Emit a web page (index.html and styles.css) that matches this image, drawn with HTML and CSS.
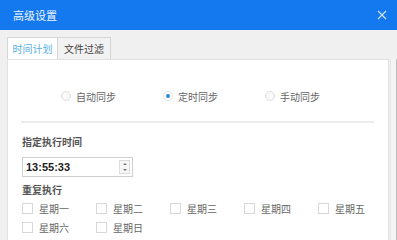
FILE: index.html
```html
<!DOCTYPE html>
<html>
<head>
<meta charset="utf-8">
<link rel="stylesheet" href="styles.css">
</head>
<body>
<div class="dialog">
  <div class="titlebar">
    <span class="title">高级设置</span>
    <svg class="close" width="10" height="10" viewBox="0 0 10 10"><path d="M1 1L9 9M9 1L1 9" stroke="#cfe3fb" stroke-width="1.2" fill="none"/></svg>
  </div>
  <div class="body">
    <div class="tabs">
      <div class="tab active">时间计划</div>
      <div class="tab">文件过滤</div>
    </div>
    <div class="panelwrap">
      <div class="panel">
        <div class="radios">
          <label class="radio"><span class="rb"></span>自动同步</label>
          <label class="radio"><span class="rb on"></span>定时同步</label>
          <label class="radio"><span class="rb"></span>手动同步</label>
        </div>
        <div class="sep"></div>
        <div class="section">
          <div class="heading">指定执行时间</div>
          <div class="timebox">
            <span class="timeval">13:55:33</span>
            <span class="spin"><span class="up"></span><span class="down"></span></span>
          </div>
          <div class="heading h2">重复执行</div>
          <div class="days">
            <label class="cb"><span class="box"></span>星期一</label>
            <label class="cb"><span class="box"></span>星期二</label>
            <label class="cb"><span class="box"></span>星期三</label>
            <label class="cb"><span class="box"></span>星期四</label>
            <label class="cb"><span class="box"></span>星期五</label>
            <label class="cb"><span class="box"></span>星期六</label>
            <label class="cb"><span class="box"></span>星期日</label>
          </div>
        </div>
      </div>
      <div class="scrollbar"></div>
    </div>
  </div>
</div>
</body>
</html>
```
FILE: styles.css
```css
* { box-sizing: border-box; }
html, body { margin: 0; padding: 0; }
body {
  width: 397px; height: 240px; overflow: hidden;
  font-family: "Noto Sans CJK SC", "Liberation Sans", sans-serif;
  font-size: 10px; color: #555;
  background: #f0f0f0;
}
.dialog { width: 397px; height: 240px; display: flex; flex-direction: column; }
.titlebar {
  height: 30px; background: #1478ee; color: #fff;
  display: flex; align-items: center; justify-content: space-between;
  padding: 0 10px 0 13px; flex-shrink: 0;
}
.title { font-size: 11px; color: #eef5ff; }
.close { display: block; }
.body { flex: 1; display: flex; flex-direction: column; padding: 7px 0 0 7px; }
.tabs { display: flex; height: 22px; }
.tab {
  width: 51px; height: 22px; display: flex; align-items: center; justify-content: center;
  border: 1px solid #d6d6d6; border-bottom: none; background: #f2f2f2; color: #444;
  font-size: 10px;
}
.tab.active { background: #fff; color: #5ab0e0; width: 51px; }
.tab + .tab { width: 53px; border-left: none; }
.panelwrap { flex: 1; display: flex; }
.panel {
  width: 382px; background: #fff; border: 1px solid #e2e2e2; border-bottom: none;
}
.scrollbar {
  width: 8px; margin-left: 1px;
  border-left: 1px solid #e6e6e6; border-right: 1px solid #bdbdbd; background: #f4f4f4;
}
.radios { display: flex; padding: 29px 0 0 53px; height: 61px; }
.radio { display: flex; align-items: center; height: 14px; width: 102px; color: #666; }
.rb {
  width: 10px; height: 10px; border-radius: 50%; border: 1px solid #dcdcdc; background: #fafafa;
  margin-right: 5px; position: relative;
}
.rb.on { border-color: #dceaf5; }
.rb.on::after {
  content: ""; position: absolute; left: 2px; top: 2px; width: 4px; height: 4px;
  border-radius: 50%; background: #2a8fd0;
}
.sep { height: 2px; background: #ececec; margin: 0 14px 0 13px; }
.section { padding: 12px 0 0 14px; }
.heading { font-weight: bold; color: #555; font-size: 10px; line-height: 14px; }
.timebox {
  margin-top: 8px; width: 111px; height: 20px; border: 1px solid #cfcfcf;
  display: flex; align-items: center; justify-content: space-between; padding: 0 2px 0 3px;
}
.timeval { font-family: "Liberation Sans", sans-serif; font-weight: bold; font-size: 11px; color: #222; }
.spin { width: 11px; height: 14px; border: 1px solid #dcdcdc; display: flex; flex-direction: column; background: #f6f6f6; }
.up, .down { flex: 1; position: relative; }
.up::after, .down::after {
  content: ""; position: absolute; left: 3px; width: 0; height: 0;
  border-left: 2px solid transparent; border-right: 2px solid transparent;
}
.up::after { top: 2px; border-bottom: 2px solid #777; }
.down::after { top: 2px; border-top: 2px solid #777; }
.h2 { margin-top: 6px; }
.days { display: grid; grid-template-columns: repeat(5, 74px); row-gap: 5px; margin-top: 4px; }
.cb { display: flex; align-items: center; height: 14px; color: #666; }
.box { width: 11px; height: 11px; border: 1px solid #d8d8d8; margin-right: 6px; background: #fff; }
```
